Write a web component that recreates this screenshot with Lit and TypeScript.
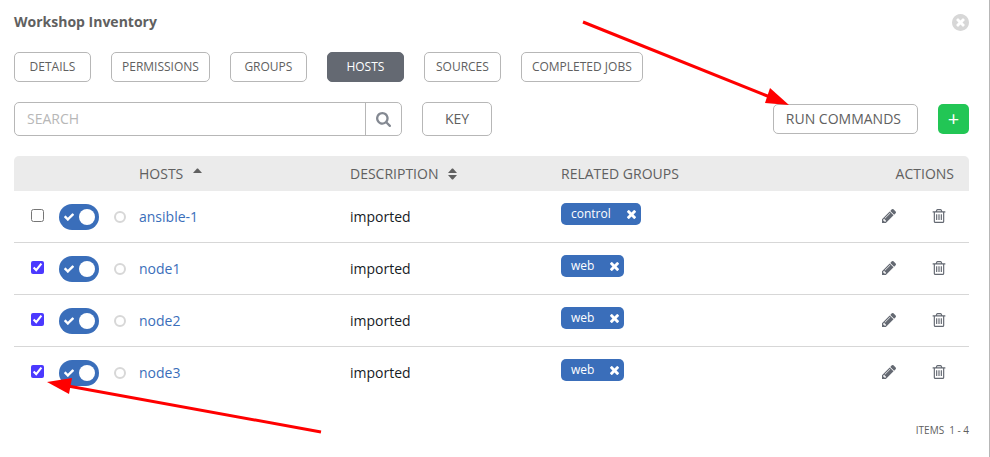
import { LitElement, html, css, svg } from "lit";
import { customElement, state } from "lit/decorators.js";
import { classMap } from "lit/directives/class-map.js";

interface Host {
  name: string;
  description: string;
  group: string;
  selected: boolean;
}

interface Glyph {
  box: string;
  path: string;
}

const glyphs: Record<string, Glyph> = {
  magnifier: {
    box: "0 128 1664 1664",
    path: "M1152 832q0-185-131.5-316.5t-316.5-131.5-316.5 131.5-131.5 316.5 131.5 316.5 316.5 131.5 316.5-131.5 131.5-316.5zm512 832q0 52-38 90t-90 38q-54 0-90-38l-343-342q-179 124-399 124-143 0-273.5-55.5t-225-150-150-225-55.5-273.5 55.5-273.5 150-225 225-150 273.5-55.5 273.5 55.5 225 150 150 225 55.5 273.5q0 220-124 399l343 343q37 37 37 90z",
  },
  close: {
    box: "128 128 1536 1536",
    path: "M1277 1122q0-26-19-45l-181-181 181-181q19-19 19-45 0-27-19-46l-90-90q-19-19-46-19-26 0-45 19l-181 181-181-181q-19-19-45-19-27 0-46 19l-90 90q-19 19-19 46 0 26 19 45l181 181-181 181q-19 19-19 45 0 27 19 46l90 90q19 19 46 19 26 0 45-19l181-181 181 181q19 19 45 19 27 0 46-19l90-90q19-19 19-46zm387-226q0 209-103 385.5t-279.5 279.5-385.5 103-385.5-103-279.5-279.5-103-385.5 103-385.5 279.5-279.5 385.5-103 385.5 103 279.5 279.5 103 385.5z",
  },
  times: {
    box: "302 366 1188 1188",
    path: "M1490 1322q0 40-28 68l-136 136q-28 28-68 28t-68-28l-294-294-294 294q-28 28-68 28t-68-28l-136-136q-28-28-28-68t28-68l294-294-294-294q-28-28-28-68t28-68l136-136q28-28 68-28t68 28l294 294 294-294q28-28 68-28t68 28l136 136q28 28 28 68t-28 68l-294 294 294 294q28 28 28 68z",
  },
  check: {
    box: "121 306 1550 1216",
    path: "M1671 566q0 40-28 68l-724 724-136 136q-28 28-68 28t-68-28l-136-136-362-362q-28-28-28-68t28-68l136-136q28-28 68-28t68 28l294 295 656-657q28-28 68-28t68 28l136 136q28 28 28 68z",
  },
  pencil: {
    box: "128 149 1515 1515",
    path: "M491 1536l91-91-235-235-91 91v107h128v128h107zm523-928q0-22-22-22-10 0-17 7l-542 542q-7 7-7 17 0 22 22 22 10 0 17-7l542-542q7-7 7-17zm-54-192l416 416-832 832h-416v-416zm683 96q0 53-37 90l-166 166-416-416 166-165q36-38 90-38 53 0 91 38l235 234q37 39 37 91z",
  },
  trash: {
    box: "192 128 1408 1536",
    path: "M704 736v576q0 14-9 23t-23 9h-64q-14 0-23-9t-9-23v-576q0-14 9-23t23-9h64q14 0 23 9t9 23zm256 0v576q0 14-9 23t-23 9h-64q-14 0-23-9t-9-23v-576q0-14 9-23t23-9h64q14 0 23 9t9 23zm256 0v576q0 14-9 23t-23 9h-64q-14 0-23-9t-9-23v-576q0-14 9-23t23-9h64q14 0 23 9t9 23zm128 724v-948h-896v948q0 22 7 40.5t14.5 27 10.5 8.5h832q3 0 10.5-8.5t14.5-27 7-40.5zm-672-1076h448l-48-117q-7-9-17-11h-317q-10 2-17 11zm928 32v64q0 14-9 23t-23 9h-96v948q0 83-47 143.5t-113 60.5h-832q-66 0-113-58.5t-47-141.5v-952h-96q-14 0-23-9t-9-23v-64q0-14 9-23t23-9h309l70-167q15-37 54-63t79-26h320q40 0 79 26t54 63l70 167h309q14 0 23 9t9 23z",
  },
};

const icon = (name: string) => html`
  <svg class="icon ${name}" viewBox=${glyphs[name].box} aria-hidden="true">
    ${svg`<path d=${glyphs[name].path}></path>`}
  </svg>
`;

@customElement("app-root")
export class AppRoot extends LitElement {
  static styles = css`
    :host {
      display: block;
      position: relative;
      box-sizing: border-box;
      min-height: 100vh;
      padding: 12px 20px 20px 14px;
      border-right: 1px solid #b7b7b7;
      background: #fff;
      color: #161b1f;
      font-family: "Open Sans", "Noto Sans", sans-serif;
      font-size: 14px;
      line-height: 20px;
    }
    * {
      box-sizing: border-box;
    }
    button,
    input {
      margin: 0;
      padding: 0;
      font: inherit;
      color: inherit;
    }
    button {
      border: 0;
      background: none;
      cursor: pointer;
    }
    .icon {
      display: block;
      fill: currentColor;
    }
    .head {
      display: flex;
      justify-content: space-between;
      align-items: center;
      height: 20px;
      margin-bottom: 20px;
    }
    h1 {
      margin: 0;
      font-size: 14px;
      font-weight: 700;
      color: #606060;
    }
    .dismiss {
      color: #d7d7d7;
    }
    .close {
      width: 17px;
      height: 17px;
    }
    .tabs {
      display: flex;
      gap: 20px;
      margin-bottom: 20px;
    }
    .btn {
      border: 1px solid #b7b7b7;
      border-radius: 5px;
      background: #fff;
      color: #606060;
      white-space: nowrap;
    }
    .tab {
      height: 30px;
      min-width: 77px;
      padding: 0 10px 1px;
      font-size: 12px;
    }
    .tab.active {
      border-color: #646972;
      background: #646972;
      color: #fff;
    }
    .toolbar {
      display: flex;
      align-items: center;
      gap: 20px;
      margin-bottom: 20px;
    }
    .search {
      display: flex;
      flex: 0 1 388px;
      height: 34px;
      border: 1px solid #b7b7b7;
      border-radius: 5px;
      overflow: hidden;
    }
    .search input {
      flex: 1;
      min-width: 0;
      padding: 0 12px;
      border: 0;
      outline: 0;
      background: none;
    }
    .search input::placeholder {
      color: #b7b7b7;
      opacity: 1;
    }
    .search button {
      display: grid;
      place-items: center;
      width: 36px;
      border-left: 1px solid #b7b7b7;
      color: #848992;
    }
    .magnifier {
      width: 15px;
      height: 15px;
    }
    .key {
      width: 70px;
      height: 34px;
    }
    .run {
      height: 30px;
      margin-left: auto;
      padding: 0 16px 0 12px;
    }
    .add {
      width: 31px;
      height: 30px;
      border-radius: 5px;
      background: #22c655;
      color: #fff;
      font-size: 20px;
    }
    table {
      width: 100%;
      border-spacing: 0;
      table-layout: fixed;
    }
    th,
    td {
      padding: 0;
      text-align: left;
    }
    th {
      height: 35px;
      background: #ebebeb;
      color: #606060;
      font-weight: 400;
    }
    th:first-child {
      border-radius: 5px 0 0 0;
    }
    th:last-child {
      border-radius: 0 5px 0 0;
      padding-right: 15px;
      text-align: right;
    }
    .lead {
      width: 125px;
    }
    .column {
      width: 211px;
    }
    .sortable {
      display: flex;
      align-items: center;
      gap: 10px;
    }
    .sort {
      width: 9px;
      height: 12px;
      fill: #606060;
    }
    td {
      height: 52px;
      border-bottom: 1px solid #d7d7d7;
    }
    tr:last-child td {
      border-bottom-color: transparent;
    }
    .controls {
      display: flex;
      align-items: center;
      gap: 15px;
      padding-left: 17px;
    }
    .pick {
      width: 13px;
      height: 13px;
      margin-bottom: 2px;
      accent-color: #4b39ff;
    }
    .switch {
      display: flex;
      align-items: center;
      justify-content: space-between;
      width: 40px;
      height: 26px;
      padding: 0 4px 0 5px;
      border-radius: 13px;
      background: #3a6eba;
      color: #fff;
    }
    .check {
      width: 10px;
      height: 8px;
    }
    .knob {
      width: 16px;
      height: 16px;
      border-radius: 50%;
      background: #fff;
    }
    .status {
      width: 12px;
      height: 12px;
      border: 2px solid #d7d7d7;
      border-radius: 50%;
    }
    a {
      color: #3a6eba;
      text-decoration: none;
    }
    .tag {
      display: inline-flex;
      align-items: center;
      gap: 16px;
      height: 22px;
      margin-bottom: 6px;
      padding: 0 5px 0 10px;
      border-radius: 5px;
      background: #3a6eba;
      color: #fff;
      font-size: 12px;
      vertical-align: middle;
    }
    .tag button {
      padding-top: 2px;
    }
    .times {
      width: 9px;
      height: 9px;
    }
    .actions {
      display: flex;
      justify-content: flex-end;
      gap: 36px;
      padding: 0 23px 1px 0;
      color: #646972;
    }
    .pencil,
    .trash {
      width: 14px;
      height: 14px;
    }
    .items {
      display: flex;
      justify-content: flex-end;
      gap: 5px;
      margin-top: 21px;
      color: #606060;
      font-size: 10px;
    }
    .pointers {
      position: absolute;
      top: 0;
      left: 0;
      width: 330px;
      height: 440px;
      overflow: visible;
      pointer-events: none;
      fill: #f00;
      stroke: #f00;
    }
    .pointers line {
      stroke-width: 3;
    }
    .pointers polygon {
      stroke: none;
    }
  `;

  @state() private tab = "HOSTS";

  @state() private hosts: Host[] = [
    { name: "ansible-1", description: "imported", group: "control", selected: false },
    { name: "node1", description: "imported", group: "web", selected: true },
    { name: "node2", description: "imported", group: "web", selected: true },
    { name: "node3", description: "imported", group: "web", selected: true },
  ];

  private tabs = ["DETAILS", "PERMISSIONS", "GROUPS", "HOSTS", "SOURCES", "COMPLETED JOBS"];

  private row(host: Host) {
    return html`
      <tr>
        <td>
          <div class="controls">
            <input class="pick" type="checkbox" aria-label="Select ${host.name}" .checked=${host.selected} />
            <button class="switch" role="switch" aria-checked="true" aria-label="Enable ${host.name}">
              ${icon("check")}<span class="knob"></span>
            </button>
            <span class="status"></span>
          </div>
        </td>
        <td><a href="#${host.name}">${host.name}</a></td>
        <td>${host.description}</td>
        <td>
          <span class="tag">
            <span>${host.group}</span>
            <button aria-label="Remove ${host.group}">${icon("times")}</button>
          </span>
        </td>
        <td>
          <div class="actions">
            <button aria-label="Edit ${host.name}">${icon("pencil")}</button>
            <button aria-label="Delete ${host.name}">${icon("trash")}</button>
          </div>
        </td>
      </tr>
    `;
  }

  render() {
    return html`
      <header class="head">
        <h1>Workshop Inventory</h1>
        <button class="dismiss" aria-label="Close">${icon("close")}</button>
      </header>
      <nav class="tabs">
        ${this.tabs.map(
          (name) => html`<button
            class=${classMap({ btn: true, tab: true, active: name === this.tab })}
            @click=${() => (this.tab = name)}
          >${name}</button>`
        )}
      </nav>
      <div class="toolbar">
        <div class="search">
          <input type="text" placeholder="SEARCH" aria-label="Search" />
          <button aria-label="Search">${icon("magnifier")}</button>
        </div>
        <button class="btn key">KEY</button>
        <button class="btn run">RUN COMMANDS</button>
        <button class="add" aria-label="Add host">+</button>
      </div>
      <table>
        <thead>
          <tr>
            <th class="lead"></th>
            <th class="column">
              <div class="sortable">
                HOSTS
                <svg class="sort" viewBox="0 0 9 12"><path d="M0 5L4 0.5h1L9 5z" /></svg>
              </div>
            </th>
            <th class="column">
              <div class="sortable">
                DESCRIPTION
                <svg class="sort" viewBox="0 0 9 12"><path d="M0 5L4 0.5h1L9 5zM0 7h9L5 11.5H4z" /></svg>
              </div>
            </th>
            <th class="column">RELATED GROUPS</th>
            <th>ACTIONS</th>
          </tr>
        </thead>
        <tbody>
          ${this.hosts.map((host) => this.row(host))}
        </tbody>
      </table>
      <footer class="items"><span>ITEMS</span><span>1 - 4</span></footer>
      <svg class="pointers" aria-hidden="true">
        <line x1="583" y1="22" x2="770" y2="97" />
        <polygon points="789,105 770,88 765,103" />
        <line x1="321" y1="432" x2="68" y2="386" />
        <polygon points="47,382 72,378 69,394" />
      </svg>
    `;
  }
}
